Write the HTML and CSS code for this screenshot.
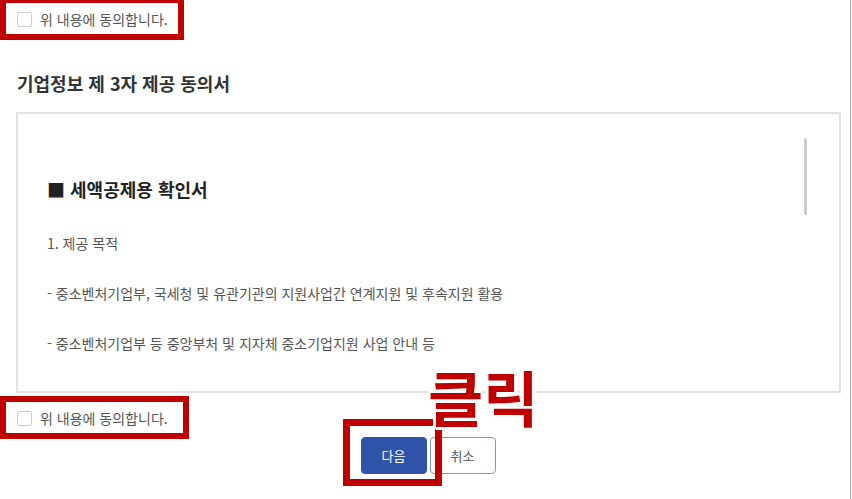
FILE: index.html
```html
<!DOCTYPE html>
<html lang="ko">
<head>
    <meta charset="UTF-8">
    <meta name="viewport" content="width=device-width, initial-scale=1.0">
    <title>기업정보 제 3자 제공 동의서</title>
    <link rel="stylesheet" href="styles.css">
</head>
<body>
    <div class="page">
        <!-- 상단 동의 체크 -->
        <label class="agree">
            <span class="checkbox"></span>
            <span class="agree-text">위 내용에 동의합니다.</span>
        </label>

        <h2 class="section-title">기업정보 제 3자 제공 동의서</h2>

        <div class="terms-box">
            <div class="terms-content">
                <h3 class="terms-heading">■ 세액공제용 확인서</h3>
                <p>1. 제공 목적</p>
                <p>- 중소벤처기업부, 국세청 및 유관기관의 지원사업간 연계지원 및 후속지원 활용</p>
                <p>- 중소벤처기업부 등 중앙부처 및 지자체 중소기업지원 사업 안내 등</p>
            </div>
            <div class="scroll-thumb"></div>
        </div>

        <label class="agree agree-bottom">
            <span class="checkbox"></span>
            <span class="agree-text">위 내용에 동의합니다.</span>
        </label>

        <div class="buttons">
            <a href="#" class="btn btn-primary">다음</a>
            <a href="#" class="btn">취소</a>
        </div>

        <!-- 안내용 표시 -->
        <div class="mark mark-top"></div>
        <div class="mark mark-bottom"></div>
        <div class="mark mark-next"></div>
        <div class="click-label">클릭</div>
    </div>
</body>
</html>
```

FILE: styles.css
```css
* {
    margin: 0;
    padding: 0;
    box-sizing: border-box;
}

body {
    font-family: "Noto Sans CJK KR", "Noto Sans", sans-serif;
    background: #fff;
    color: #555;
}

.page {
    position: relative;
    width: 851px;
    height: 499px;
    border-right: 1px solid #a8a8a8;
    padding: 12px 0 0 16px;
}

.agree {
    display: flex;
    align-items: center;
    height: 15px;
    padding-left: 1px;
    font-size: 14px;
    color: #555;
}

.agree-bottom {
    margin-top: 18px;
}

.checkbox {
    width: 15px;
    height: 15px;
    border: 1px solid #cdcdcd;
    border-radius: 2px;
    background: #fff;
    margin-right: 8px;
}

.agree-text {
    line-height: 15px;
}

.section-title {
    margin-top: 45px;
    padding-left: 1px;
    font-size: 18px;
    font-weight: bold;
    color: #333;
    line-height: 22px;
}

.terms-box {
    display: flex;
    margin-top: 18px;
    width: 825px;
    height: 281px;
    border: 2px solid #e2e2e2;
}

.terms-content {
    flex: 1;
    padding: 63px 0 0 29px;
}

.terms-heading {
    font-size: 18px;
    font-weight: bold;
    color: #222;
    line-height: 24px;
    margin-bottom: 32px;
}

.terms-content p {
    font-size: 14px;
    line-height: 20px;
    margin-bottom: 30px;
}

.scroll-thumb {
    width: 3px;
    height: 77px;
    margin: 24px 32px 0 0;
    background: #cdcdcd;
    border-radius: 2px;
}

.buttons {
    display: flex;
    justify-content: center;
    gap: 3px;
    margin-top: 11px;
    padding-right: 10px;
}

.btn {
    display: flex;
    align-items: center;
    justify-content: center;
    width: 66px;
    height: 37px;
    font-size: 13px;
    text-decoration: none;
    color: #555;
    background: #fff;
    border: 1px solid #7b97d2;
    border-radius: 4px;
}

.btn-primary {
    background: #2e53a8;
    border-color: #2e53a8;
    color: #fff;
}

.mark {
    position: absolute;
    border: 6px solid #c00000;
}

.mark-top {
    left: 0;
    top: -3px;
    width: 184px;
    height: 43px;
}

.mark-bottom {
    left: 0;
    top: 396px;
    width: 189px;
    height: 43px;
}

.mark-next {
    left: 343px;
    top: 419px;
    width: 99px;
    height: 67px;
    border-width: 7px;
}

.click-label {
    position: absolute;
    left: 428px;
    top: 366px;
    font-size: 60px;
    font-weight: bold;
    line-height: 1;
    color: #c00000;
    text-shadow: 3px 0 #fff, -3px 0 #fff, 0 3px #fff, 0 -3px #fff,
        2px 2px #fff, -2px -2px #fff, 2px -2px #fff, -2px 2px #fff;
}
```
